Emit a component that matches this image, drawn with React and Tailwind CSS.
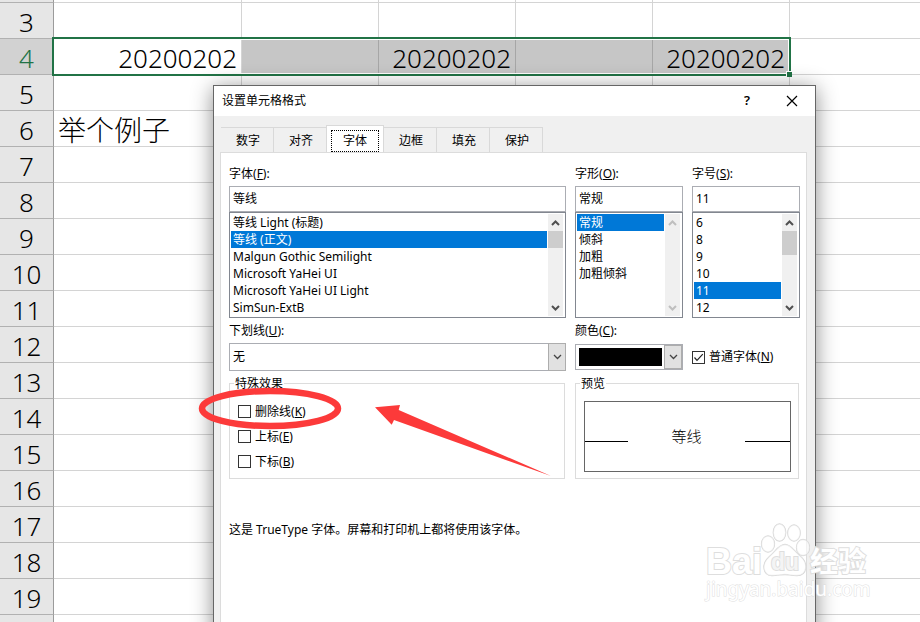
import React, { useState } from 'react';

const FONTS = ['等线 Light (标题)', '等线 (正文)', 'Malgun Gothic Semilight', 'Microsoft YaHei UI', 'Microsoft YaHei UI Light', 'SimSun-ExtB'];
const STYLES = ['常规', '倾斜', '加粗', '加粗倾斜'];
const SIZES = ['6', '8', '9', '10', '11', '12'];
const TABS = ['数字', '对齐', '字体', '边框', '填充', '保护'];
const ROWS = [3, 4, 5, 6, 7, 8, 9, 10, 11, 12, 13, 14, 15, 16, 17, 18, 19];
const COLS = ['A', 'B', 'C', 'D', 'E', 'F'];

const CELLS = {
  A4: '20200202',
  C4: '20200202',
  E4: '20200202',
  A6: '举个例子',
};

const Chevron = ({ up, className }) => (
  <svg viewBox="0 0 9 6" className={`w-[9px] h-[6px] ${className}`} fill="none" stroke="currentColor">
    <path d={up ? 'M1 5 L4.5 1.5 L8 5' : 'M1 1 L4.5 4.5 L8 1'} />
  </svg>
);

const Sheet = () => {
  const cellClass = (row, col) => {
    if (row === 6) return 'border-[#d4d4d4] text-[28px]';
    if (row !== 4 || col === 'F') return 'border-[#d4d4d4]';
    if (col === 'A') return 'border-[#d4d4d4] text-right';
    return 'bg-[#c6c6c6] border-[#a6a6a6] text-right';
  };

  return (
    <table className="w-full table-fixed border-separate border-spacing-0 text-[26px] leading-[32px] font-light text-black">
      <colgroup>
        <col className="w-[54px]" />
        <col className="w-[188px]" />
        <col className="w-[137px]" />
        <col className="w-[137px]" />
        <col className="w-[137px]" />
        <col className="w-[137px]" />
        <col />
      </colgroup>
      <tbody>
        <tr className="h-[3px]">
          <th className="p-0 bg-[#e6e6e6] border-r border-b border-r-[#9b9b9b] border-b-[#b1b1b1]"></th>
          {COLS.map((col) => (
            <td key={col} className="p-0 border-r border-b last:border-r-0 border-[#d4d4d4]"></td>
          ))}
        </tr>
        {ROWS.map((row) => (
          <tr key={row} className="h-9">
            <th
              className={`px-0 pb-0 pt-[3px] text-center font-light border-r border-b border-r-[#9b9b9b] border-b-[#b1b1b1] ${
                row === 4 ? 'bg-[#d2d2d2] text-[#217346]' : 'bg-[#e6e6e6]'
              }`}
            >
              {row}
            </th>
            {COLS.map((col) => (
              <td
                key={col}
                className={`relative pb-0 pt-[3px] px-1 border-r border-b last:border-r-0 whitespace-nowrap ${cellClass(row, col)}`}
              >
                {CELLS[col + row]}
                {col === 'A' && row === 4 && (
                  <div className="absolute z-10 -left-0.5 -top-0.5 w-[739px] h-[39px] border-2 border-[#217346]">
                    <div className="h-full border border-white"></div>
                    <div className="absolute -right-[3px] -bottom-[3px] w-1.5 h-1.5 bg-[#217346] border-t border-l border-white"></div>
                  </div>
                )}
              </td>
            ))}
          </tr>
        ))}
        <tr className="h-9">
          <th className="p-0 bg-[#e6e6e6] border-r border-[#9b9b9b]"></th>
          {COLS.map((col) => (
            <td key={col} className="p-0 border-r last:border-r-0 border-[#d4d4d4]"></td>
          ))}
        </tr>
      </tbody>
    </table>
  );
};

const ScrollBar = ({ disabled, thumb }) => (
  <div className="flex flex-col items-center w-[15px] mr-px bg-[#f0f0f0]">
    <div className="h-[17px] flex items-center">
      <Chevron up className={`stroke-2 ${disabled ? 'text-[#bfbfbf]' : 'text-[#505050]'}`} />
    </div>
    <div className={`w-full ${thumb}`}></div>
    <div className="h-[17px] mt-auto flex items-center">
      <Chevron className={`stroke-2 ${disabled ? 'text-[#bfbfbf]' : 'text-[#505050]'}`} />
    </div>
  </div>
);

const PickList = ({ id, label, hotkey, items, value, onChange, disabled, thumb }) => (
  <div className="min-w-0">
    <label htmlFor={id} className="block h-[21px] leading-[17px]">
      {label}(<u>{hotkey}</u>):
    </label>
    <input
      id={id}
      type="text"
      value={value.replace(' (正文)', '')}
      onChange={(e) => onChange(e.target.value)}
      className="block w-full h-[26px] px-[3px] pb-0.5 border border-[#abadb3] bg-white outline-none"
    />
    <div className="flex h-[106px] p-px border border-[#828790] bg-white">
      <ul role="listbox" aria-label={label} className="flex-1 min-w-0 mr-px">
        {items.map((item) => (
          <li
            key={item}
            role="option"
            aria-selected={item === value}
            onClick={() => onChange(item)}
            className={`h-[17px] leading-[17px] px-0.5 whitespace-nowrap ${item === value ? 'bg-[#0078d7] text-white' : ''}`}
          >
            {item}
          </li>
        ))}
      </ul>
      <ScrollBar disabled={disabled} thumb={thumb} />
    </div>
  </div>
);

const Check = ({ id, label, hotkey, checked, onChange }) => (
  <div className="flex items-center h-[25px]">
    <span className="grid mr-1">
      <input
        id={id}
        type="checkbox"
        checked={checked}
        onChange={(e) => onChange(e.target.checked)}
        className="peer appearance-none col-start-1 row-start-1 w-[13px] h-[13px] border border-[#333333] bg-white"
      />
      <svg
        viewBox="0 0 13 13"
        className="hidden peer-checked:block pointer-events-none col-start-1 row-start-1 w-[13px] h-[13px]"
        fill="none"
        stroke="#222222"
        strokeWidth="1.2"
      >
        <path d="M2.5 6.5 L5 9.3 L10.8 3.2" />
      </svg>
    </span>
    <label htmlFor={id}>
      {label}(<u>{hotkey}</u>)
    </label>
  </div>
);

const DropArrow = () => (
  <span className="absolute right-0 inset-y-0 w-[18px] flex items-center justify-center border border-[#adadad] bg-[#e1e1e1] pointer-events-none">
    <Chevron className="text-[#444444] [stroke-width:1.3]" />
  </span>
);

const FormatDialog = () => {
  const [tab, setTab] = useState('字体');
  const [font, setFont] = useState('等线 (正文)');
  const [fontStyle, setFontStyle] = useState('常规');
  const [size, setSize] = useState('11');
  const [normal, setNormal] = useState(true);
  const [strike, setStrike] = useState(false);
  const [sup, setSup] = useState(false);
  const [sub, setSub] = useState(false);

  return (
    <div
      role="dialog"
      aria-labelledby="dialog-title"
      className="absolute z-20 left-[213px] top-[85px] w-[603px] -bottom-4 flex flex-col border border-[#666666] bg-[#f0f0f0] shadow-[0_3px_20px_rgba(0,0,0,0.45)] text-[12px] text-black"
    >
      <div className="flex items-center h-[30px] pl-2 pr-[17px] bg-white">
        <h1 id="dialog-title" className="flex-1">设置单元格格式</h1>
        <button type="button" aria-label="Help" className="w-4 mr-[31px] text-[13px] font-semibold">?</button>
        <button type="button" aria-label="Close">
          <svg viewBox="0 0 12 12" className="w-3 h-3" stroke="black" strokeWidth="1.2">
            <path d="M1 1 L11 11 M11 1 L1 11" />
          </svg>
        </button>
      </div>

      <div role="tablist" className="flex items-end h-9 pl-[7px]">
        {TABS.map((name) => (
          <button
            key={name}
            type="button"
            role="tab"
            aria-selected={name === tab}
            onClick={() => setTab(name)}
            className={
              name === tab
                ? 'w-[58px] h-7 -ml-px p-1 -mb-px bg-white border border-b-0 border-[#d9d9d9]'
                : 'w-[53px] h-[25px] pt-0.5 pl-0.5 border-t border-r border-[#d9d9d9]'
            }
          >
            {name === tab ? (
              <span className="flex items-center justify-center h-[22px] border border-dotted border-black">{name}</span>
            ) : (
              name
            )}
          </button>
        ))}
      </div>

      <div role="tabpanel" className="flex-1 ml-1.5 mr-2 pl-2 pr-1.5 pt-3 bg-white border border-[#dcdcdc]">
        <div className="grid grid-cols-[1fr_108px_108px] gap-x-[9px]">
          <PickList id="font" label="字体" hotkey="F" items={FONTS} value={font} onChange={setFont} thumb="h-[17px] bg-[#cdcdcd]" />
          <PickList id="style" label="字形" hotkey="O" items={STYLES} value={fontStyle} onChange={setFontStyle} disabled thumb="h-0" />
          <PickList id="size" label="字号" hotkey="S" items={SIZES} value={size} onChange={setSize} thumb="h-6 bg-[#cdcdcd]" />

          <label htmlFor="underline" className="flex items-center h-[25px]">
            <span>下划线(<u>U</u>):</span>
          </label>
          <label htmlFor="color" className="col-span-2 flex items-center h-[25px]">
            <span>颜色(<u>C</u>):</span>
          </label>

          <div className="relative h-7">
            <select id="underline" className="appearance-none w-full h-full px-[3px] border border-[#abadb3] bg-white outline-none">
              <option>无</option>
            </select>
            <DropArrow />
          </div>
          <div className="relative h-[26px] self-center border border-[#abadb3] py-[3px] pl-[3px] pr-5">
            <select id="color" className="appearance-none block w-full h-full bg-black outline-none">
              <option value="#000000"></option>
            </select>
            <DropArrow />
          </div>
          <div className="self-center">
            <Check id="normal" label="普通字体" hotkey="N" checked={normal} onChange={setNormal} />
          </div>

          <fieldset className="mt-1 mr-px h-[104px] border border-[#dcdcdc] px-2 pt-[7px]">
            <legend className="-ml-1 px-px h-[17px] leading-[18px]">特殊效果</legend>
            <Check id="strike" label="删除线" hotkey="K" checked={strike} onChange={setStrike} />
            <Check id="sup" label="上标" hotkey="E" checked={sup} onChange={setSup} />
            <Check id="sub" label="下标" hotkey="B" checked={sub} onChange={setSub} />
          </fieldset>
          <fieldset className="col-span-2 mt-1 mr-px h-[104px] border border-[#dcdcdc] pl-2 pr-[7px] pt-[9px]">
            <legend className="-ml-1 px-px h-[17px] leading-[18px]">预览</legend>
            <div className="flex items-center justify-between h-[71px] border border-[#666666] text-[15px] font-light">
              <span className="w-[43px] h-px mt-2.5 bg-black"></span>
              <span>等线</span>
              <span className="w-[45px] h-px mt-2.5 bg-black"></span>
            </div>
          </fieldset>
        </div>
        <p className="mt-[42px] leading-[18px]">这是 TrueType 字体。屏幕和打印机上都将使用该字体。</p>
      </div>
    </div>
  );
};

// red ellipse and arrow drawn over the dialog
const Markup = () => (
  <svg viewBox="0 0 360 100" className="absolute z-30 left-[195px] top-[380px] w-[360px] h-[100px] pointer-events-none">
    <ellipse cx="75" cy="28.5" rx="68" ry="17.5" fill="none" stroke="#fc3a3a" strokeWidth="6.5" />
    <path d="M180 27.3 L205 25 L203.7 30 L356 96 L199 40 L196.7 44.7 Z" fill="#fc3a3a" />
  </svg>
);

const Watermark = () => (
  <div className="absolute z-30 left-[706px] top-[522px] pointer-events-none font-bold text-white [paint-order:stroke_fill] [-webkit-text-stroke:2px_#dedede]">
    <div className="flex items-end h-[56px] font-['Liberation_Sans','Noto_Sans_CJK_SC',sans-serif]">
      <span className="w-[54px] text-[36px] leading-[32px]">Bai</span>
      <div className="relative w-[50px] h-[56px]">
        <svg viewBox="0 0 50 56" className="w-full h-full" fill="white" fillOpacity="0.6" stroke="#d6d6d6" strokeWidth="1.3">
          <ellipse cx="8" cy="22" rx="6.5" ry="8" />
          <ellipse cx="19.5" cy="10.500" rx="6.2" ry="8.5" />
          <ellipse cx="34" cy="11" rx="6.2" ry="8" />
          <ellipse cx="43" cy="25.5" rx="6.5" ry="8" />
          <path d="M25 22.5 C31 22.5 34 29 40 34 C49 41 47 53.500 37 53.500 C31 53.500 29 52.500 25 52.500 C20 52.500 18 53.500 12 53.500 C3 53.500 1 42 9 35 C16 29 19 22.5 25 22.5 Z" />
        </svg>
        <span className="absolute inset-x-0 bottom-1 text-center text-[23px] leading-6 text-[#f4f4f4]">du</span>
      </div>
      <span className="text-[28px] leading-[30px]">经验</span>
    </div>
    <div className="text-[19px] leading-[22px] font-normal [-webkit-text-stroke:1px_#dedede]">jingyan.baidu.com</div>
  </div>
);

const App = () => {
  return (
    <div className="relative h-screen overflow-hidden bg-white font-['Noto_Sans','Noto_Sans_CJK_SC',sans-serif]">
      <Sheet />
      <FormatDialog />
      <Markup />
      <Watermark />
    </div>
  );
};

export default App;
